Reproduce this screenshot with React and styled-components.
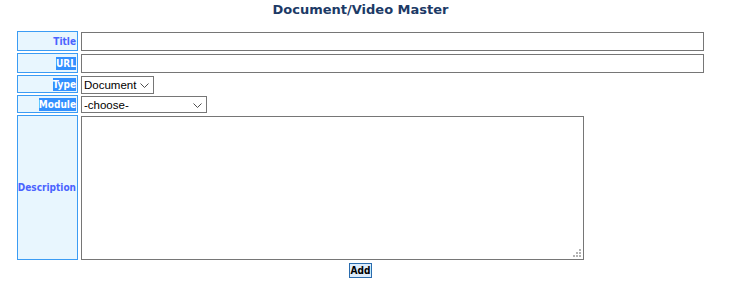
import styled, { createGlobalStyle } from "styled-components";

const GlobalStyle = createGlobalStyle`
  body {
    margin: 0;
    background: #ffffff;
    font-family: "DejaVu Sans", Verdana, sans-serif;
  }
`;

const Page = styled.div`
  width: 687px;
  padding: 2px 0 0 17px;
`;

const Heading = styled.h1`
  margin: 0 0 13px;
  text-align: center;
  font-size: 13px;
  line-height: 16px;
  font-weight: bold;
  color: #1c3a66;
`;

const Form = styled.div`
  display: grid;
  grid-template-columns: 61px 1fr;
  grid-template-rows: 20px 20px 18px 18px 145px;
  column-gap: 3px;
  row-gap: 2px;
`;

const Label = styled.div`
  box-sizing: border-box;
  border: 1px solid #3b9cf4;
  background: #e8f6fe;
  display: flex;
  align-items: center;
  justify-content: flex-end;
  padding-right: 1px;
  font-family: "DejaVu Sans Condensed", "DejaVu Sans", sans-serif;
  font-weight: bold;
  font-size: 10px;
  color: #4a63ff;
`;

const Selected = styled.span`
  background: #3390ff;
  color: #ffffff;
  line-height: 13px;
`;

const Field = styled.div`
  padding-top: 1px;
  min-height: 0;
`;

const TextInput = styled.input`
  box-sizing: border-box;
  display: block;
  width: 623px;
  height: 19px;
  margin: 0;
  border: 1px solid #767676;
  border-radius: 0;
  padding: 0 3px;
  font-family: "Liberation Sans", sans-serif;
  font-size: 11px;
`;

const SelectBox = styled.div`
  position: relative;
  width: ${(p) => p.$w}px;
  height: ${(p) => p.$h}px;
`;

const Select = styled.select`
  appearance: none;
  box-sizing: border-box;
  display: block;
  width: 100%;
  height: 100%;
  margin: 0;
  border: 1px solid #767676;
  border-radius: 0;
  background: #ffffff;
  color: #000000;
  padding: 0 0 0 2px;
  font-family: "Liberation Sans", sans-serif;
  font-size: 11.5px;
  outline: none;
`;

const Chevron = styled.svg`
  position: absolute;
  right: 5px;
  top: 50%;
  margin-top: -2px;
  pointer-events: none;
`;

const AreaBox = styled.div`
  position: relative;
  width: 503px;
  height: 144px;
`;

const TextArea = styled.textarea`
  box-sizing: border-box;
  display: block;
  width: 100%;
  height: 100%;
  margin: 0;
  border: 1px solid #767676;
  border-radius: 0;
  resize: none;
  font-family: "Liberation Sans", sans-serif;
  font-size: 11px;
`;

const Grip = styled.svg`
  position: absolute;
  right: 3px;
  bottom: 3px;
  pointer-events: none;
`;

const Actions = styled.div`
  display: flex;
  justify-content: center;
  padding-top: 3px;
`;

const AddButton = styled.button`
  box-sizing: border-box;
  height: 15px;
  padding: 0 1px;
  border: 1px solid #2a6cae;
  border-radius: 0;
  background: #dcecfc;
  color: #000000;
  font-family: "DejaVu Sans Condensed", sans-serif;
  font-weight: bold;
  font-size: 10px;
  line-height: 12px;
`;

function Dropdown({ width, height, value, options }) {
  return (
    <SelectBox $w={width} $h={height}>
      <Select defaultValue={value}>
        {options.map((o) => (
          <option key={o}>{o}</option>
        ))}
      </Select>
      <Chevron width="9" height="5" viewBox="0 0 9 5">
        <path d="M0.5 0.5 L4.5 4.5 L8.5 0.5" fill="none" stroke="#4d4d4d" strokeWidth="1" />
      </Chevron>
    </SelectBox>
  );
}

// dotted resize grip, three rows growing to the left
const gripDots = [
  [6, 0],
  [3, 3],
  [6, 3],
  [0, 6],
  [3, 6],
  [6, 6],
];

export default function App() {
  return (
    <>
      <GlobalStyle />
      <Page>
        <Heading>Document/Video Master</Heading>
        <Form>
          <Label>Title</Label>
          <Field>
            <TextInput type="text" />
          </Field>

          <Label>
            <Selected>URL</Selected>
          </Label>
          <Field>
            <TextInput type="text" />
          </Field>

          <Label>
            <Selected>Type</Selected>
          </Label>
          <Field>
            <Dropdown width={73} height={18} value="Document" options={["Document", "Video"]} />
          </Field>

          <Label>
            <Selected>Module</Selected>
          </Label>
          <Field>
            <Dropdown width={126} height={17} value="-choose-" options={["-choose-"]} />
          </Field>

          <Label>Description</Label>
          <Field>
            <AreaBox>
              <TextArea />
              <Grip width="8" height="8" viewBox="0 0 8 8">
                {gripDots.map(([x, y]) => (
                  <rect key={`${x}-${y}`} x={x} y={y} width="2" height="2" fill="#b3b3b3" />
                ))}
              </Grip>
            </AreaBox>
          </Field>
        </Form>
        <Actions>
          <AddButton>Add</AddButton>
        </Actions>
      </Page>
    </>
  );
}
